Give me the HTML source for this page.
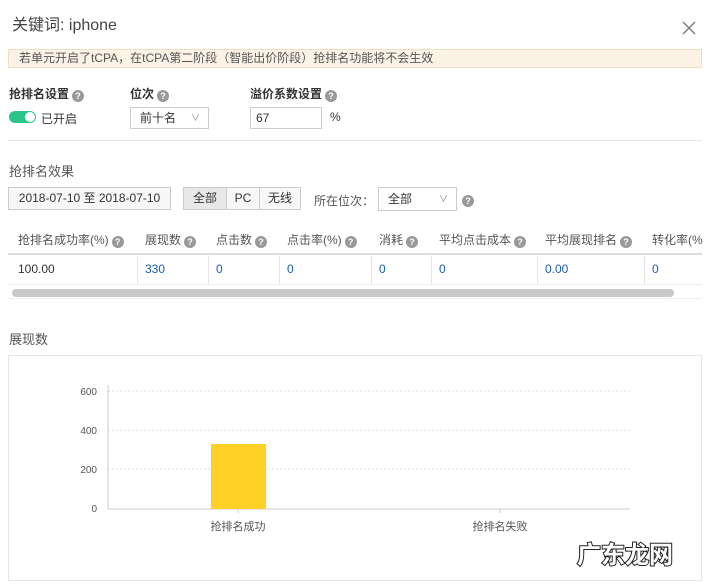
<!DOCTYPE html>
<html><head><meta charset="utf-8"><style>
*{box-sizing:border-box;margin:0;padding:0}
body{width:711px;height:585px;background:#fff;font-family:"Liberation Sans","Noto Sans CJK SC",sans-serif;color:#333;font-size:12px;position:relative;overflow:hidden}
.a{position:absolute;white-space:nowrap}
.q{display:inline-block;width:12px;height:12px;border-radius:50%;background:#999;color:#fff;font-size:9px;line-height:12px;text-align:center;font-weight:bold;vertical-align:-1px;margin-left:3px}
.btn{position:absolute;border:1px solid #ccc;background:#f7f7f7;height:23px;line-height:21px;text-align:center;font-size:12px}
.blue{color:#1a5fb4}
.th{position:absolute;top:231px;color:#555}
.td{position:absolute;top:262px}
.vl{position:absolute;top:254px;height:31px;width:1px;background:#e5e5e5}
</style></head><body>
<div class="a" style="left:12px;top:11px;font-size:16px;color:#444">关键词: iphone</div>
<svg class="a" style="left:682px;top:21px" width="14" height="14"><path d="M1 1L13 13M13 1L1 13" stroke="#777" stroke-width="1.4"/></svg>
<div class="a" style="left:8px;top:49px;width:694px;height:19px;background:#fcf2e5;border:1px solid #f2dcc0;padding-left:10px;line-height:17px;color:#555">若单元开启了tCPA，在tCPA第二阶段（智能出价阶段）抢排名功能将不会生效</div>
<div class="a" style="left:9px;top:85px;font-weight:bold">抢排名设置<span class="q">?</span></div>
<div class="a" style="left:130px;top:85px;font-weight:bold">位次<span class="q">?</span></div>
<div class="a" style="left:250px;top:85px;font-weight:bold">溢价系数设置<span class="q">?</span></div>
<div class="a" style="left:9px;top:111px;width:27px;height:12px;border-radius:6px;background:#2bc48a"><div style="position:absolute;right:1px;top:1px;width:10px;height:10px;border-radius:50%;background:#fff"></div></div>
<div class="a" style="left:41px;top:110px">已开启</div>
<div class="a" style="left:130px;top:107px;width:79px;height:22px;border:1px solid #ccc;padding-left:9px;line-height:20px;background:#fff">前十名<span style="position:absolute;right:8px;color:#888;font-size:9px">∨</span></div>
<div class="a" style="left:250px;top:107px;width:72px;height:22px;border:1px solid #ccc;padding-left:5px;line-height:20px">67</div>
<div class="a" style="left:330px;top:110px">%</div>
<div class="a" style="left:8px;top:140px;width:694px;height:1px;background:#e5e5e5"></div>
<div class="a" style="left:9px;top:161px;font-size:13px;color:#555">抢排名效果</div>
<div class="btn" style="left:8px;top:187px;width:163px">2018-07-10 至 2018-07-10</div>
<div class="btn" style="left:183px;top:187px;width:44px;background:#e8e8e8">全部</div>
<div class="btn" style="left:226px;top:187px;width:34px">PC</div>
<div class="btn" style="left:259px;top:187px;width:42px">无线</div>
<div class="a" style="left:314px;top:192px;color:#555">所在位次：</div>
<div class="a" style="left:378px;top:187px;width:79px;height:24px;border:1px solid #ccc;padding-left:9px;line-height:22px">全部<span style="position:absolute;right:8px;color:#888;font-size:9px">∨</span></div>
<div class="a" style="left:459px;top:192px"><span class="q">?</span></div>
<div class="th" style="left:18px">抢排名成功率(%)<span class="q">?</span></div>
<div class="th" style="left:145px">展现数<span class="q">?</span></div>
<div class="th" style="left:216px">点击数<span class="q">?</span></div>
<div class="th" style="left:287px">点击率(%)<span class="q">?</span></div>
<div class="th" style="left:379px">消耗<span class="q">?</span></div>
<div class="th" style="left:439px">平均点击成本<span class="q">?</span></div>
<div class="th" style="left:545px">平均展现排名<span class="q">?</span></div>
<div class="th" style="left:652px">转化率(%</div>
<div class="a" style="left:8px;top:253px;width:694px;height:2px;background:#ddd"></div>
<div class="a" style="left:8px;top:284px;width:694px;height:1px;background:#eee"></div>
<div class="vl" style="left:137px"></div><div class="vl" style="left:208px"></div><div class="vl" style="left:279px"></div><div class="vl" style="left:371px"></div><div class="vl" style="left:431px"></div><div class="vl" style="left:537px"></div><div class="vl" style="left:644px"></div>
<div class="td" style="left:18px">100.00</div>
<div class="td blue" style="left:145px">330</div>
<div class="td blue" style="left:216px">0</div>
<div class="td blue" style="left:287px">0</div>
<div class="td blue" style="left:379px">0</div>
<div class="td blue" style="left:439px">0</div>
<div class="td blue" style="left:545px">0.00</div>
<div class="td blue" style="left:652px">0</div>
<div class="a" style="left:12px;top:289px;width:662px;height:8px;border-radius:4px;background:#c8c8c8"></div>
<div class="a" style="left:8px;top:298px;width:694px;height:1px;background:#eee"></div>
<div class="a" style="left:9px;top:329px;font-size:13px;color:#555">展现数</div>
<div class="a" style="left:8px;top:355px;width:694px;height:226px;border:1px solid #e5e5e5"></div>
<svg class="a" style="left:0;top:0" width="711" height="585">
<g stroke="#ddd" stroke-dasharray="2,2"><line x1="108" y1="391" x2="630" y2="391"/><line x1="108" y1="430" x2="630" y2="430"/><line x1="108" y1="469" x2="630" y2="469"/></g>
<line x1="108" y1="509" x2="630" y2="509" stroke="#ccc"/>
<line x1="108" y1="385" x2="108" y2="509" stroke="#ccc"/>
<line x1="238" y1="509" x2="238" y2="513" stroke="#ccc"/><line x1="500" y1="509" x2="500" y2="513" stroke="#ccc"/>
<rect x="211" y="444" width="55" height="65" fill="#ffd026"/>
<g font-size="10" fill="#555" text-anchor="end" font-family="Liberation Sans"><text x="97" y="395">600</text><text x="97" y="434">400</text><text x="97" y="473">200</text><text x="97" y="512">0</text></g>
<g font-size="11" fill="#555" text-anchor="middle" font-family="Liberation Sans,Noto Sans CJK SC"><text x="238" y="530">抢排名成功</text><text x="500" y="530">抢排名失败</text></g>
<text x="577" y="563" font-size="24" font-weight="bold" fill="#fff" stroke="#222" stroke-width="2" paint-order="stroke" font-family="Noto Sans CJK SC">广东龙网</text>
</svg>
</body></html>
